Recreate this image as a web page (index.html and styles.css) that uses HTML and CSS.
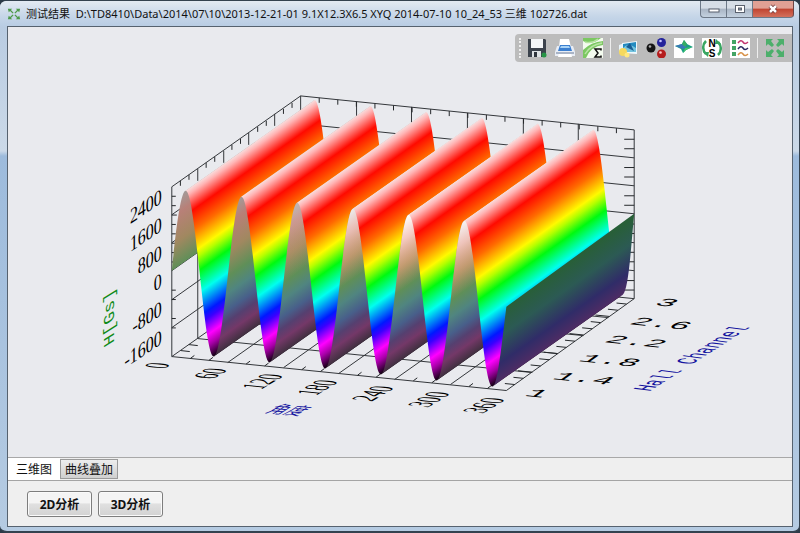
FILE: index.html
```html
<!DOCTYPE html>
<html lang="zh-CN">
<head>
<meta charset="utf-8">
<title>测试结果</title>
<link rel="stylesheet" href="styles.css">
</head>
<body>
<div class="window">
  <header class="titlebar">
    <svg class="app-icon" viewBox="0 0 16 16" aria-hidden="true">
      <g fill="#4d9a4a"><path d="M1 2l5 0-1.500 1.500 3 3-1 1-3-3L2 6z"/><path d="M15 2l-5 0 1.500 1.500-3 3 1 1 3-3L14 6z"/><path d="M1 14l5 0-1.500-1.500 3-3-1-1-3 3L2 10z"/><path d="M15 14l-5 0 1.500-1.500-3-3 1-1 3 3L14 10z"/></g>
    </svg>
    <h1 class="title">测试结果 &nbsp;D:\TD8410\Data\2014\07\10\2013-12-21-01 9.1X12.3X6.5 XYQ 2014-07-10 10_24_53 三维 102726.dat</h1>
    <div class="controls">
      <button class="ctl" aria-label="最小化"><svg viewBox="0 0 12 10"><rect x="1" y="5" width="10" height="3" fill="#fff" stroke="#59616e"/></svg></button>
      <button class="ctl" aria-label="最大化"><svg viewBox="0 0 12 10"><rect x="1.500" y="1.500" width="9" height="7" fill="#fff" stroke="#59616e"/><rect x="4.500" y="4" width="3" height="2" fill="#8a94a3" stroke="#59616e"/></svg></button>
      <button class="ctl close" aria-label="关闭"><svg viewBox="0 0 12 10"><path d="M3 2l6 6M9 2L3 8" stroke="#6b3030" stroke-width="4"/><path d="M3 2l6 6M9 2L3 8" stroke="#fff" stroke-width="2.500"/></svg></button>
    </div>
  </header>

  <main class="client">
    <section class="chart">
      <svg class="plot" viewBox="8 28 785 430" role="img" aria-label="三维图">
        <defs>
          <linearGradient id="bright" gradientUnits="userSpaceOnUse" x1="186" y1="191" x2="273.400" y2="314.900">
            <stop offset="0" stop-color="#f9dcdc"/><stop offset=".03" stop-color="#ffb4b4"/><stop offset=".13" stop-color="#ff0a00"/>
            <stop offset=".24" stop-color="#ff6a00"/><stop offset=".36" stop-color="#fffa00"/><stop offset=".4" stop-color="#b4ff00"/>
            <stop offset=".48" stop-color="#00fa10"/><stop offset=".6" stop-color="#00ffee"/><stop offset=".73" stop-color="#0018ff"/>
            <stop offset=".77" stop-color="#3a00ff"/><stop offset=".86" stop-color="#ff00ff"/><stop offset=".92" stop-color="#a800a8"/><stop offset="1" stop-color="#100010"/>
          </linearGradient>
          <linearGradient id="dim" gradientUnits="userSpaceOnUse" x1="242" y1="197" x2="308" y2="290.600">
            <stop offset="0" stop-color="#a39a98"/><stop offset=".12" stop-color="#b88078"/><stop offset=".32" stop-color="#a18860"/>
            <stop offset=".5" stop-color="#5f8f58"/><stop offset=".62" stop-color="#508580"/><stop offset=".74" stop-color="#485f8a"/>
            <stop offset=".82" stop-color="#554070"/><stop offset=".9" stop-color="#743868"/><stop offset="1" stop-color="#403040"/>
          </linearGradient>
          <linearGradient id="tail" gradientUnits="userSpaceOnUse" x1="228" y1="277" x2="275" y2="344">
            <stop offset="0" stop-color="#285f38"/><stop offset=".25" stop-color="#2c5a54"/><stop offset=".52" stop-color="#302c68"/>
            <stop offset=".8" stop-color="#602c62"/><stop offset="1" stop-color="#3a2c42"/>
          </linearGradient>
          <linearGradient id="shine" gradientUnits="userSpaceOnUse" x1="242" y1="197" x2="275" y2="244">
            <stop offset="0" stop-color="#fff"/><stop offset=".3" stop-color="#ffd8d0" stop-opacity=".85"/><stop offset=".7" stop-color="#f0b080" stop-opacity=".4"/><stop offset="1" stop-color="#c0a060" stop-opacity="0"/>
          </linearGradient>
          <path id="fall" fill="url(#bright)" d="M185 191.500L186 191C196 192 204 356 214 357L343 266C333 265 325 101 315 100Z"/>
          <path id="rise" d="M214 357C224 358 232 196 242 197L371 106C361 105 353 267 343 266Z"/>
        </defs>

        <g class="grid">
          <path d="M172 357V187L301 96L635 130V299L507 391ZM301 96V266L172 357M301 266L635 299"/>
          <path d="M172 215L301 124L635 158M172 243L301 152L635 186M172 271L301 180L635 214M172 300L301 209L635 243M172 328L301 237L635 271"/>
          <path d="M198 169v12M198 240V339L533 373M224 151v12M224 250V321L558 354M249 133v12M249 303L584 336M275 114v12M275 284L609 318"/>
          <path d="M357 102V272L228 363M412 107V277L284 368M468 113V283L339 374M524 119V289L395 380M579 124V294L451 385"/>
        </g>
        <g class="ticks">
          <path d="M301 96m18.600 1.900v5m18.600-3.100v5m18.600-3.100v5m18.600-3.100v5m18.600-3.100v5m18.600-3.100v5m18.600-3.100v5m18.600-3.100v5m18.600-3.100v5m18.600-3.100v5m18.600-3.100v5m18.600-3.100v5m18.600-3.100v5m18.600-3.100v5m18.600-3.100v5m18.600-3.100v5m18.600-3.100v5"/>
          <path d="M172 187m8.600-6v5m8.600-11v5m17.200-17v5m8.600-11v5m17.200-17v5m8.600-11v5m17.200-17v5m8.600-11v5m17.200-17v5m8.600-11v5"/>
          <path d="M172 196.500h4m-4 9.400h4m-4 9.400h5m-5 9.400h4m-4 9.400h4m-4 9.400h5m-5 9.400h4m-4 9.400h4m-4 28.200h4m-4 9.400h4m-4 19h4m-4 9.400h4"/>
          <path d="M635 139.400h-10m10 9.500h-10m10 18.800h-10m10 9.500h-10m10 18.800h-10m10 9.500h-10m10 18.800h-10m10 9.500h-10m10 18.800h-10m10 9.500h-10m10 18.800h-10m10 9.500h-10"/>
          <path d="M172 357m18.600 1.900l4-3m14.600 4.900l4-3m33.200 6.700l4-3m14.600 4.900l4-3m33.200 6.700l4-3m14.600 4.900l4-3m33.200 6.700l4-3m14.600 4.900l4-3m33.200 6.700l4-3m14.600 4.900l4-3m33.200 6.700l4-3m14.600 4.900l4-3"/>
          <path d="M507 391m8.500-6l-10-1m18.600-5.200l-10-1m18.600-5.200l-14-1.400m22.600-4.800l-10-1m18.600-5.200l-10-1m18.600-5.200l-14-1.400m22.600-4.800l-10-1m18.600-5.200l-10-1m18.600-5.200l-14-1.400m22.600-4.800l-10-1m18.600-5.200l-10-1m18.600-5.200l-14-1.400m22.600-4.800l-10-1m18.600-5.200l-10-1"/>
          <path d="M181 351l9 1M189 345l9 1"/>
        </g>

        <g class="surface">
          <path fill="url(#dim)" transform="translate(-56 -6)" d="M228 277C232 237 237 196 242 197L371 106C366 105 361 146 357 186Z"/>
          <use href="#fall"/>
          <use href="#rise" fill="url(#dim)"/>
          <g transform="translate(55.800 6)"><use href="#fall"/><use href="#rise" fill="url(#dim)"/><use href="#rise" fill="url(#shine)" opacity=".3"/></g>
          <g transform="translate(111.600 12)"><use href="#fall"/><use href="#rise" fill="url(#dim)"/><use href="#rise" fill="url(#shine)" opacity=".8"/></g>
          <g transform="translate(167.400 18)"><use href="#fall"/><use href="#rise" fill="url(#dim)"/><use href="#rise" fill="url(#shine)"/></g>
          <g transform="translate(223.200 24)"><use href="#fall"/><use href="#rise" fill="url(#dim)"/><use href="#rise" fill="url(#shine)" opacity=".9"/></g>
          <g transform="translate(279 30)"><use href="#fall"/><path fill="url(#tail)" d="M214 357C219 357.500 223 317 228 277L356 184C352 226 350 266 343 266Z"/></g>
        </g>

        <g class="value-labels">
          <text transform="matrix(1 -.67 0 1.350 162 203)">2400</text>
          <text transform="matrix(1 -.67 0 1.350 162 231)">1600</text>
          <text transform="matrix(1 -.67 0 1.350 162 259)">800</text>
          <text transform="matrix(1 -.67 0 1.350 162 287)">0</text>
          <text transform="matrix(1 -.67 0 1.350 162 315)">-800</text>
          <text transform="matrix(1 -.67 0 1.350 162 344)">-1600</text>
        </g>
        <g class="angle-labels">
          <text y="5" transform="matrix(1 -.6 2 .2 158 366)">0</text>
          <text y="5" transform="matrix(1 -.6 2 .2 211 374)">60</text>
          <text y="5" transform="matrix(1 -.6 2 .2 263 382)">120</text>
          <text y="5" transform="matrix(1 -.6 2 .2 318 388)">180</text>
          <text y="5" transform="matrix(1 -.6 2 .2 374 394)">240</text>
          <text y="5" transform="matrix(1 -.6 2 .2 430 400)">300</text>
          <text y="5" transform="matrix(1 -.6 2 .2 485 406)">360</text>
        </g>
        <g class="channel-labels">
          <text y="5" transform="matrix(2 .2 -.9 .65 538 394)">1</text>
          <text y="5" transform="matrix(2 .2 -.9 .65 585 379)">1.4</text>
          <text y="5" transform="matrix(2 .2 -.9 .65 611 361)">1.8</text>
          <text y="5" transform="matrix(2 .2 -.9 .65 637 342)">2.2</text>
          <text y="5" transform="matrix(2 .2 -.9 .65 662 324)">2.6</text>
          <text y="5" transform="matrix(2 .2 -.9 .65 668 303)">3</text>
        </g>
        <text class="axis-value" transform="matrix(0 -1.150 .95 -.6 114 343)">H[Gs]</text>
        <text class="axis-channel" transform="matrix(.88 -.56 1.600 .2 650 392)">Hall Channel</text>
        <text class="axis-angle" transform="matrix(1.100 .1 -1.100 .7 265 413)">角度</text>
      </svg>

      <div class="toolbar" role="toolbar">
        <span class="grip"></span>
        <button class="tool" aria-label="保存"><svg viewBox="0 0 20 20"><path d="M1 1h17l1 1v17H1z" fill="#3b424c"/><path d="M4 1h12v9H4z" fill="#f3f5f7"/><path d="M5 13h9v6H5z" fill="#dfe3e6"/><path d="M7 14h3v5H7z" fill="#30363e"/><circle cx="17" cy="17" r="2.500" fill="#279546"/></svg></button>
        <button class="tool" aria-label="打印"><svg viewBox="0 0 20 20"><path d="M5 1h9l2 8H4z" fill="#fff"/><path d="M2 8h16l2 6v4H0v-4z" fill="#e8edf5"/><path d="M5 7h10l2 6H3z" fill="#3b7fd0"/><path d="M6 8h8l1 2H5z" fill="#a9d3f6"/><path d="M4 15h12l1 4H3z" fill="#fff"/><path d="M1 14h18v2H1z" fill="#a9b4c6"/></svg></button>
        <button class="tool" aria-label="统计"><svg viewBox="0 0 20 20"><path d="M0 0h20v20H0z" fill="#f4fbef"/><path d="M0 3Q8 8 18 0H0zM0 12Q8 4 20 3V7Q8 8 3 20H0z" fill="#7cc862"/><path d="M2 4Q9 6 15 1M2 16Q7 7 19 5" fill="none" stroke="#b9e4a4" stroke-width="1.500"/><path d="M18 12.500V11h-6l3 4-3 4h6v-1.500" fill="none" stroke="#111" stroke-width="1.500"/></svg></button>
        <span class="sep"></span>
        <button class="tool" aria-label="导出图片"><svg viewBox="0 0 20 20"><path d="M1 7l5-2v9H1z" fill="#e8f4fa"/><path d="M4 5l15-2v13L4 15z" fill="#edf7fc"/><path d="M5 6l13-2v10l-13 0z" fill="#238bc0"/><path d="M5 10q5-6 13 0v4H5z" fill="#74c4df"/><path d="M12 5l4 8-8-4z" fill="#185e94"/><circle cx="5" cy="14" r="4" fill="#f5d95e"/><circle cx="9" cy="17" r="2.500" fill="#ffe87f"/></svg></button>
        <button class="tool" aria-label="节点"><svg viewBox="0 0 20 20"><circle cx="5" cy="10" r="4.500" fill="#151515"/><circle cx="15.500" cy="4.500" r="4.500" fill="#23239b"/><circle cx="15.500" cy="16" r="4.500" fill="#b51d1d"/><circle cx="4" cy="8.500" r="1.300" fill="#aaa"/><circle cx="14.500" cy="3" r="1.300" fill="#c4c4ff"/><circle cx="14.500" cy="14.500" r="1.300" fill="#ffc4c4"/></svg></button>
        <button class="tool" aria-label="三维曲面"><svg viewBox="0 0 20 20"><path d="M0 0h20v20H0z" fill="#fff"/><path d="M1 8l7-2 2-4 3 4 6 3-7 3-3 3-2-4z" fill="#189f82"/><path d="M1 8l7-2 5 3-4 2z" fill="#3978b8"/><path d="M8 6l2-4 3 4-2 3z" fill="#34ad64"/><path d="M11 10l7-1-6 3-3 3z" fill="#42c66a"/></svg></button>
        <button class="tool" aria-label="磁极"><svg viewBox="0 0 20 20"><path d="M0 0h20v20H0z" fill="#fff"/><path d="M4 3a9 9 0 0 0 0 13M16 17a9 9 0 0 0 0-13" fill="none" stroke="#39a661" stroke-width="2.500"/><path d="M1 14l6 0-1 5zM19 6l-6 0 1-5z" fill="#39a661"/><text class="pole" x="10" y="9">N</text><text class="pole" x="10" y="19">S</text></svg></button>
        <button class="tool" aria-label="曲线列表"><svg viewBox="0 0 20 20"><path d="M0 0h20v20H0z" fill="#fff"/><path d="M2 2h4v4H2zM2 8h4v4H2zM2 14h4v4H2z" fill="#43a465"/><g fill="none" stroke-width="1.500"><path d="M8 5q3-4 5-1t5 0" stroke="#c3346f"/><path d="M8 11q3-4 5-1t5 0" stroke="#28285e"/><path d="M8 17q3-4 5-1t5 0" stroke="#d79045"/></g></svg></button>
        <span class="sep"></span>
        <button class="tool" aria-label="全屏"><svg viewBox="0 0 20 20"><path id="corner" d="M1 1h7L6 3l3 4-2 2-4-3-2 2z" fill="#4caf6b"/><use href="#corner" transform="translate(20 0) scale(-1 1)"/><use href="#corner" transform="translate(0 20) scale(1 -1)"/><use href="#corner" transform="translate(20 20) scale(-1 -1)"/></svg></button>
      </div>
    </section>

    <nav class="tabs">
      <button class="tab active">三维图</button>
      <button class="tab">曲线叠加</button>
    </nav>
    <footer class="actions">
      <button class="action">2D分析</button>
      <button class="action">3D分析</button>
    </footer>
  </main>
</div>
</body>
</html>
```
FILE: styles.css
```css
* { box-sizing: border-box; }

body {
  margin: 0;
  background: #2c3a48;
  font-family: "Noto Sans", "Noto Sans CJK SC", sans-serif;
  font-size: 12px;
  color: #111;
}

button {
  margin: 0;
  padding: 0;
  border: 0;
  background: none;
  font: inherit;
  color: inherit;
}

svg { display: block; }

.window {
  display: flex;
  flex-direction: column;
  min-height: 100vh;
  padding: 0 6px 4px 7px;
  border: solid #34424f;
  border-width: 1px 1px 2px 0;
  border-radius: 7px;
  background: linear-gradient(#dbe5ef, #b9cce2 26px, #cbd9e8 150px, #9dbbdc 155px, #b5cbe2);
}

.titlebar {
  display: flex;
  align-items: center;
  height: 25px;
  margin: 0 -6px 0 -7px;
  padding-left: 7px;
  border-radius: 6px 6px 0 0;
  background: linear-gradient(#e3eaf2, #c6d6e8 60%, #b9cde4);
}

.app-icon { width: 14px; height: 14px; margin-right: 5px; }

.title {
  flex: 1;
  margin: 0;
  font-size: 11px;
  font-weight: 400;
  line-height: 24px;
  white-space: nowrap;
}

.controls { display: flex; align-self: flex-start; margin-right: 5px; }

.ctl {
  display: grid;
  place-items: center;
  width: 26px;
  height: 17px;
  border: 1px solid #6c7887;
  border-top: 0;
  border-right: 0;
  background: linear-gradient(#d5dde6 45%, #a8b4c3 50%, #c3d1df);
}
.ctl:first-child { border-radius: 0 0 0 4px; }
.ctl svg { width: 12px; height: 10px; }
.ctl.close {
  width: 42px;
  border-right: 1px solid #6c4444;
  border-radius: 0 0 4px 0;
  background: linear-gradient(#e0a094 45%, #c04431 50%, #d3705c);
}

.client {
  flex: 1;
  display: flex;
  flex-direction: column;
  border: 1px solid #56626f;
  background: #efefef;
}

.chart {
  position: relative;
  background: #e9eaee;
  border-bottom: 1px solid #a8a8a8;
}
.plot { width: 100%; height: auto; margin-top: 1px; }

.grid { fill: none; stroke: #33363a; stroke-width: 1; }
.ticks { fill: none; stroke: #24272a; stroke-width: 1; }

.plot text { font-size: 16px; }
.value-labels, .angle-labels { font-family: "Liberation Serif", serif; }
.value-labels { text-anchor: end; }
.angle-labels, .channel-labels { text-anchor: middle; }
.channel-labels, .axis-value, .axis-channel { font-family: "Liberation Mono", monospace; }
.axis-value { fill: #108a18; }
.axis-channel { fill: #1414a0; }
.axis-angle { fill: #1414a0; font-family: "Noto Sans CJK SC", sans-serif; }

.toolbar {
  position: absolute;
  top: 7px;
  right: 0;
  display: flex;
  align-items: center;
  height: 28px;
  padding: 0 3px 0 4px;
  border-radius: 4px 0 0 4px;
  background: #bcbcbc;
}
.grip { width: 4px; height: 20px; border-left: 2px dotted #eee; }
.tool { display: grid; place-items: center; width: 28px; height: 24px; }
.tool svg { width: 20px; height: 20px; }
.pole { font: 700 10px "Liberation Sans", sans-serif; text-anchor: middle; }
.sep { width: 1px; height: 20px; margin: 0 3px; background: #eee; }

.tabs {
  display: flex;
  align-items: flex-end;
  height: 23px;
  border-bottom: 1px solid #a4a4a4;
}
.tab {
  height: 20px;
  margin-bottom: 1px;
  padding: 0 4px;
  border: 1px solid #9a9a9a;
  background: linear-gradient(#ededed, #cfcfcf);
}
.tab.active {
  align-self: stretch;
  height: auto;
  margin: 0;
  padding: 0 8px;
  border: 0;
  background: #fff;
}

.actions { display: flex; gap: 6px; padding: 10px 19px 8px; }
.action {
  width: 65px;
  height: 26px;
  border: 1px solid #7d7d7d;
  border-radius: 3px;
  background: linear-gradient(#f4f4f4 45%, #e0e0e0 50%, #d2d2d2);
  box-shadow: inset 0 0 0 1px #fafafa;
  font-weight: 700;
}
```
